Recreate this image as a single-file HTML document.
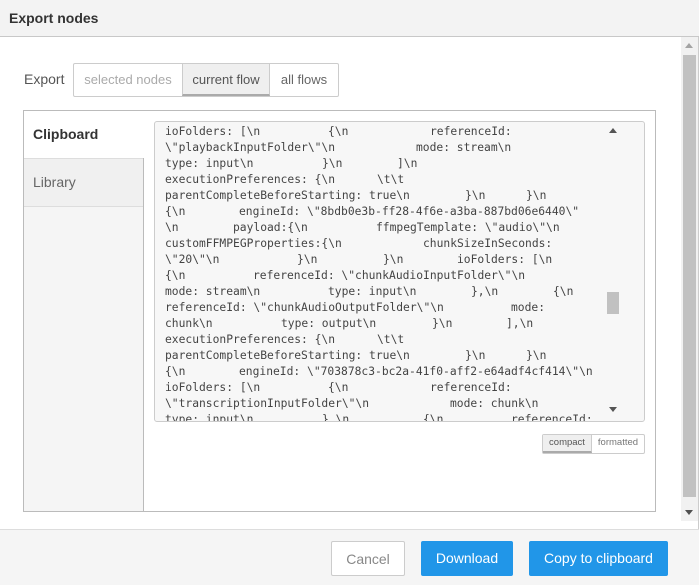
<!DOCTYPE html>
<html><head><meta charset="utf-8"><style>
*{box-sizing:border-box;margin:0;padding:0}
body{width:699px;height:585px;position:relative;overflow:hidden;background:#fff;font-family:"Liberation Sans",Arial,sans-serif;color:#555}
.abs{position:absolute}
#title{left:0;top:0;width:699px;height:37px;background:#f3f3f3;border-bottom:1px solid #c8c8c8;font-weight:bold;font-size:14px;color:#333;padding:10px 0 0 9px}
#footer{left:0;top:529px;width:699px;height:56px;background:#f5f5f5;border-top:1px solid #ddd}
.btn{position:absolute;top:541px;height:35px;font-size:14px;text-align:center;line-height:34px;border-radius:2px}
.code{left:154px;top:121px;width:491px;height:301px;background:#f7f7f7;border:1px solid #ccc;border-radius:3px;overflow:hidden;font-family:"DejaVu Sans Mono","Liberation Mono",monospace;font-size:11.3px;color:#444}
.ln{position:absolute;height:16px;line-height:16px;white-space:pre;left:10px}
.ln span{position:absolute;top:0;white-space:pre}
.tri{width:0;height:0;border-left:4px solid transparent;border-right:4px solid transparent}
</style></head><body>
<div id="title" class="abs">Export nodes</div>

<div class="abs" style="left:681px;top:37px;width:17px;height:484px;background:#f1f1f1"></div>
<div class="abs" style="left:683px;top:55px;width:13px;height:442px;background:#c1c1c1"></div>
<div class="abs tri" style="left:685px;top:43px;border-bottom:5px solid #a3a3a3"></div>
<div class="abs tri" style="left:685px;top:510px;border-top:5px solid #505050"></div>
<div class="abs" style="left:698px;top:37px;width:1px;height:492px;background:#ccc"></div>

<div class="abs" style="left:24px;top:71px;font-size:14px;color:#555">Export</div>
<div class="abs" style="left:73px;top:63px;width:266px;height:34px;border:1px solid #ccc;border-radius:2px;background:#fff"></div>
<div class="abs" style="left:74px;top:64px;width:108px;height:32px;font-size:13px;color:#aaa;text-align:center;line-height:32px">selected nodes</div>
<div class="abs" style="left:182px;top:64px;width:88px;height:32px;background:#efefef;border-left:1px solid #ccc;border-right:1px solid #ccc;border-bottom:2px solid #aaa;font-size:13px;color:#555;text-align:center;line-height:31px">current flow</div>
<div class="abs" style="left:270px;top:64px;width:68px;height:32px;font-size:13px;color:#666;text-align:center;line-height:32px">all flows</div>

<div class="abs" style="left:23px;top:110px;width:633px;height:402px;border:1px solid #bbb;background:#fff"></div>
<div class="abs" style="left:24px;top:158px;width:120px;height:353px;background:#f5f5f5;border-right:1px solid #bbb"></div>
<div class="abs" style="left:24px;top:158px;width:119px;height:49px;background:#f0f0f0;border-top:1px solid #ddd;border-bottom:1px solid #ddd"></div>
<div class="abs" style="left:33px;top:126px;font-size:14px;font-weight:bold;color:#333">Clipboard</div>
<div class="abs" style="left:33px;top:174px;font-size:14px;color:#666">Library</div>

<div class="abs code">
<div class="ln" style="top:-14px">                           -</div>
<div class="ln" style="top:2px">ioFolders: [\n<span style="left:163px">{\n</span><span style="left:265px">referenceId:</span></div>
<div class="ln" style="top:18px">\"playbackInputFolder\"\n<span style="left:251px">mode: stream\n</span></div>
<div class="ln" style="top:34px">type: input\n<span style="left:157px">}\n</span><span style="left:232px">]\n</span></div>
<div class="ln" style="top:50px">executionPreferences: {\n<span style="left:212px">\t\t</span></div>
<div class="ln" style="top:66px">parentCompleteBeforeStarting: true\n<span style="left:300px">}\n</span><span style="left:361px">}\n</span></div>
<div class="ln" style="top:82px">{\n<span style="left:74px">engineId: \"8bdb0e3b-ff28-4f6e-a3ba-887bd06e6440\"</span></div>
<div class="ln" style="top:98px">\n<span style="left:68px">payload:{\n</span><span style="left:211px">ffmpegTemplate: \"audio\"\n</span></div>
<div class="ln" style="top:114px">customFFMPEGProperties:{\n<span style="left:258px">chunkSizeInSeconds:</span></div>
<div class="ln" style="top:130px">\"20\"\n<span style="left:132px">}\n</span><span style="left:218px">}\n</span><span style="left:292px">ioFolders: [\n</span></div>
<div class="ln" style="top:146px">{\n<span style="left:88px">referenceId: \"chunkAudioInputFolder\"\n</span></div>
<div class="ln" style="top:162px">mode: stream\n<span style="left:163px">type: input\n</span><span style="left:306px">},\n</span><span style="left:388px">{\n</span></div>
<div class="ln" style="top:178px">referenceId: \"chunkAudioOutputFolder\"\n<span style="left:346px">mode:</span></div>
<div class="ln" style="top:194px">chunk\n<span style="left:116px">type: output\n</span><span style="left:267px">}\n</span><span style="left:341px">],\n</span></div>
<div class="ln" style="top:210px">executionPreferences: {\n<span style="left:212px">\t\t</span></div>
<div class="ln" style="top:226px">parentCompleteBeforeStarting: true\n<span style="left:300px">}\n</span><span style="left:361px">}\n</span></div>
<div class="ln" style="top:242px">{\n<span style="left:74px">engineId: \"703878c3-bc2a-41f0-aff2-e64adf4cf414\"\n</span></div>
<div class="ln" style="top:258px">ioFolders: [\n<span style="left:163px">{\n</span><span style="left:265px">referenceId:</span></div>
<div class="ln" style="top:274px">\"transcriptionInputFolder\"\n<span style="left:285px">mode: chunk\n</span></div>
<div class="ln" style="top:290px">type: input\n<span style="left:157px">},\n</span><span style="left:258px">{\n</span><span style="left:346px">referenceId:</span></div>
<div class="abs" style="left:450px;top:0;width:15px;height:299px;background:#f7f7f7"></div>
<div class="abs tri" style="left:454px;top:6px;border-bottom:5px solid #555"></div>
<div class="abs tri" style="left:454px;top:285px;border-top:5px solid #555"></div>
<div class="abs" style="left:452px;top:170px;width:12px;height:22px;background:#c1c1c1"></div>
</div>

<div class="abs" style="left:542px;top:434px;width:103px;height:20px;border:1px solid #ccc;border-radius:2px;background:#fff"></div>
<div class="abs" style="left:543px;top:435px;width:49px;height:18px;background:#efefef;border-right:1px solid #ccc;border-bottom:2px solid #aaa;font-size:9.5px;color:#555;text-align:center;line-height:16px">compact</div>
<div class="abs" style="left:592px;top:435px;width:52px;height:18px;font-size:9.5px;color:#777;text-align:center;line-height:16px">formatted</div>

<div id="footer" class="abs"></div>
<div class="btn" style="left:331px;width:74px;background:#fff;border:1px solid #ccc;color:#888">Cancel</div>
<div class="btn" style="left:421px;width:92px;background:#2196e8;color:#fff">Download</div>
<div class="btn" style="left:529px;width:139px;background:#2196e8;color:#fff">Copy to clipboard</div>
</body></html>
